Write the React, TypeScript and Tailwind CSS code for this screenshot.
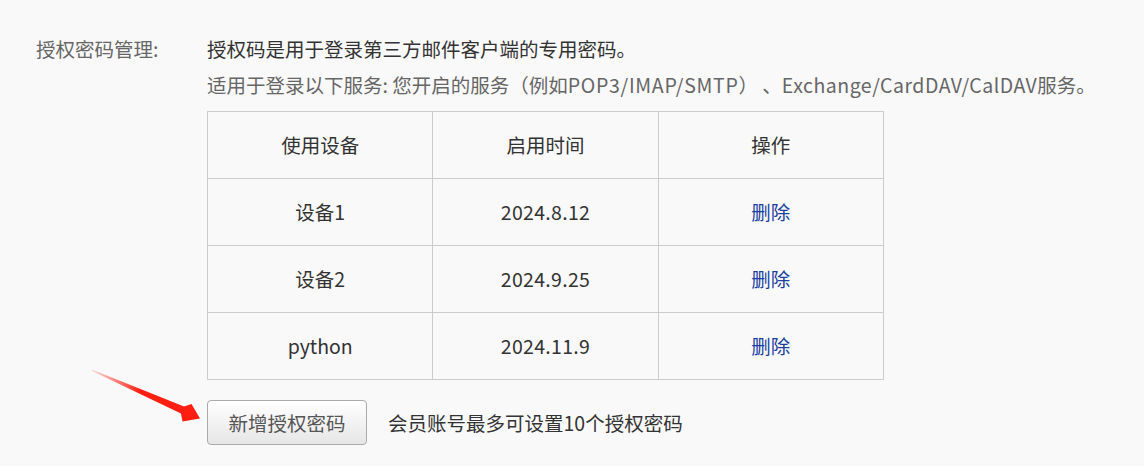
import React from 'react';

const rows = [
  { device: '设备1', date: '2024.8.12' },
  { device: '设备2', date: '2024.9.25' },
  { device: 'python', date: '2024.11.9' },
];

const Arrow: React.FC = () => (
  <svg className="absolute left-0 top-0 pointer-events-none" width="220" height="440" viewBox="0 0 220 440">
    <defs>
      <linearGradient id="tail" x1="92" y1="370" x2="140" y2="391" gradientUnits="userSpaceOnUse">
        <stop offset="0" stopColor="#ff3b2f" stopOpacity="0.15" />
        <stop offset="1" stopColor="#ff1e12" />
      </linearGradient>
    </defs>
    <polygon
      points="92,369.5 184,406.5 191.5,404 200,418.5 182.5,421.5 181,413.5 92,371"
      fill="url(#tail)"
    />
  </svg>
);

export default function App() {
  return (
    <div className="w-full bg-white" style={{ fontFamily: '"Noto Sans CJK SC", "Noto Sans", sans-serif' }}>
      <div className="relative h-[466px] bg-[#f9f9f9] text-[19.5px] leading-[36px]">
        <div className="flex pt-[31px]">
          <div className="w-[207px] shrink-0 pl-[36px] text-[#666]">授权密码管理:</div>
          <div className="flex flex-col">
            <div className="text-[#333]">授权码是用于登录第三方邮件客户端的专用密码。</div>
            <div className="text-[#666]">
              适用于登录以下服务: 您开启的服务（例如<span className="tracking-[0.7px]">POP3/IMAP/SMTP</span>）&nbsp;、
              <span className="tracking-[0.5px]">Exchange/CardDAV/CalDAV</span>服务。
            </div>
            <table className="mt-[8px] w-[677px] border-collapse table-fixed text-center text-[#333]">
              <thead>
                <tr>
                  <th className="h-[67px] border border-[#ccc] font-normal">使用设备</th>
                  <th className="h-[67px] border border-[#ccc] font-normal">启用时间</th>
                  <th className="h-[67px] border border-[#ccc] font-normal">操作</th>
                </tr>
              </thead>
              <tbody>
                {rows.map(r => (
                  <tr key={r.device}>
                    <td className="h-[67px] border border-[#ccc]">{r.device}</td>
                    <td className="h-[67px] border border-[#ccc] tracking-[0.3px]">{r.date}</td>
                    <td className="h-[67px] border border-[#ccc]">
                      <a className="text-[#1a3f9f] cursor-pointer">删除</a>
                    </td>
                  </tr>
                ))}
              </tbody>
            </table>
            <div className="mt-[20px] flex items-center">
              <button className="h-[45px] w-[160px] rounded-[4px] border border-[#aaa] bg-gradient-to-b from-white to-[#e6e6e6] text-[#555]">
                新增授权密码
              </button>
              <span className="ml-[21px] text-[#333]">会员账号最多可设置10个授权密码</span>
            </div>
          </div>
        </div>
        <Arrow />
      </div>
      <div className="h-[5px] bg-white" />
    </div>
  );
}
